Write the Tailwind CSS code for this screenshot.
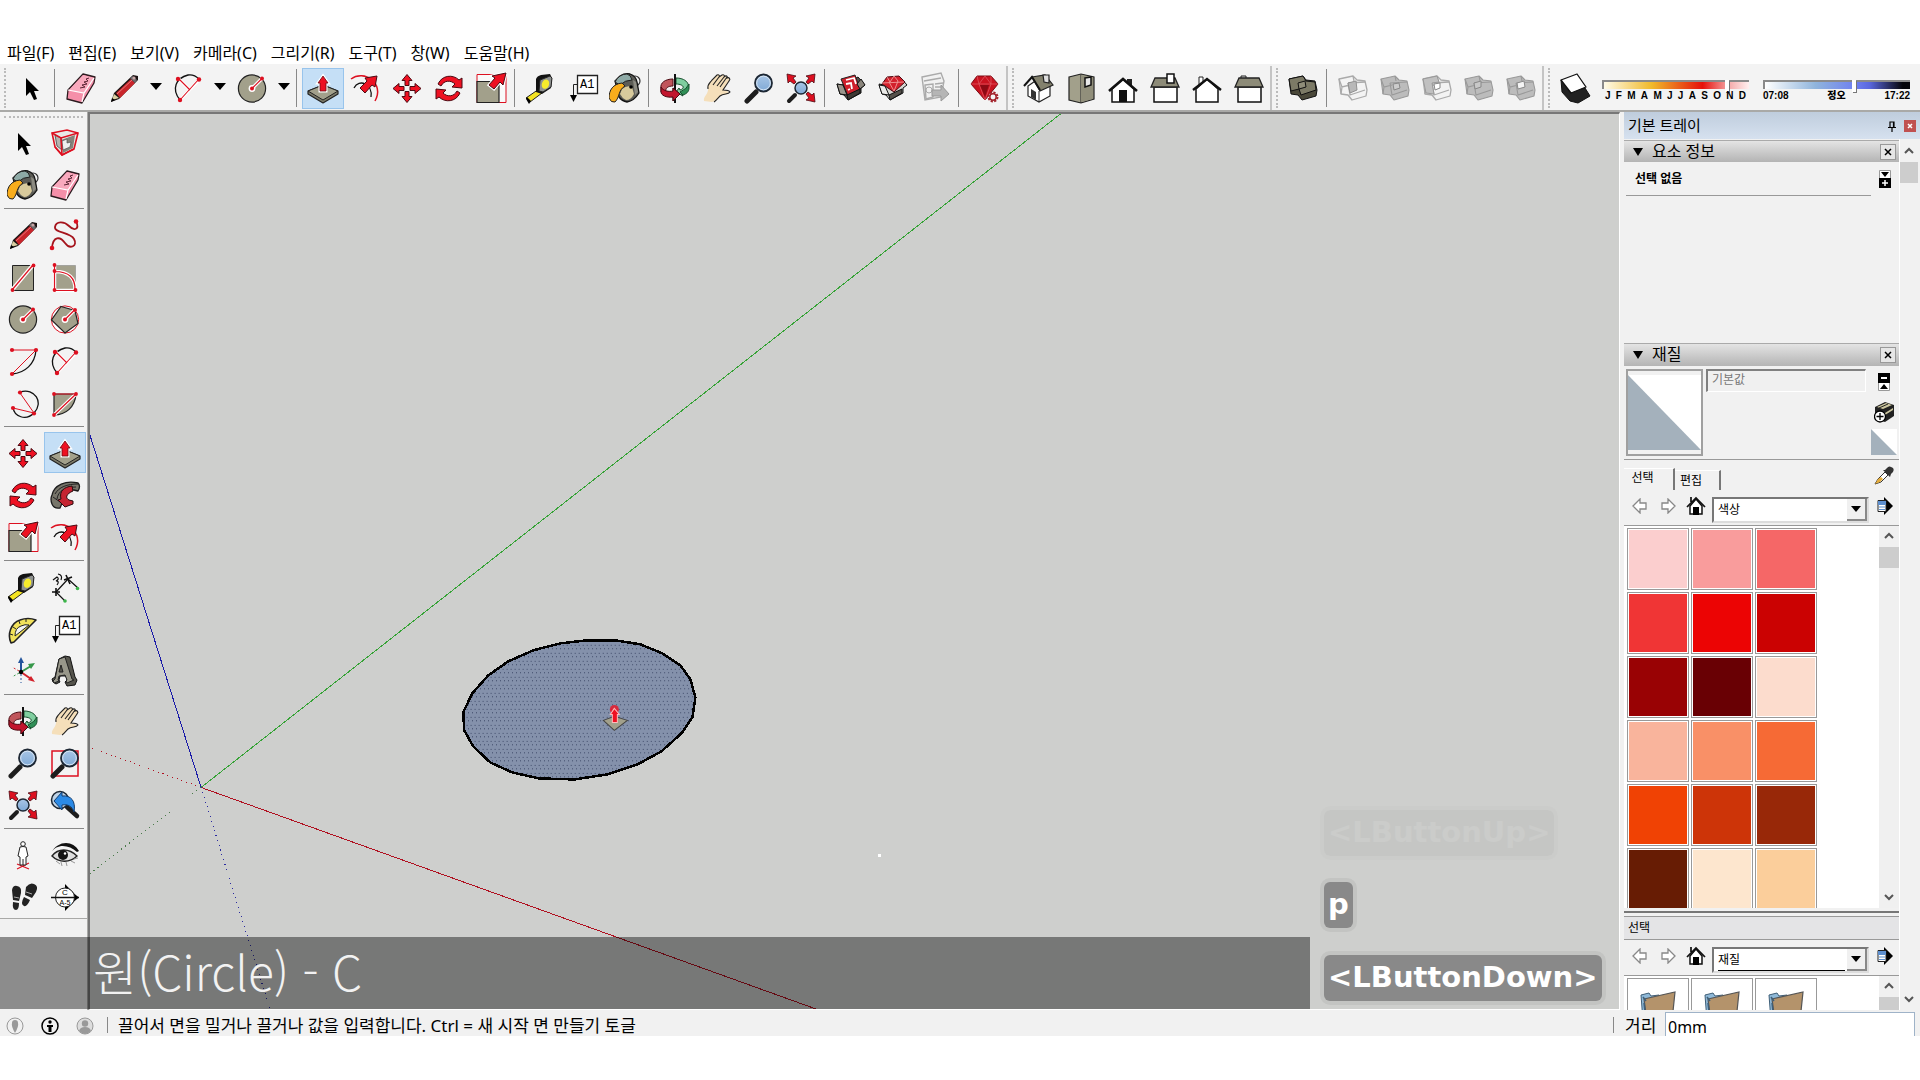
<!DOCTYPE html>
<html lang="ko">
  <head>
    <meta charset="UTF-8" />
    <title>SketchUp</title>
    <script src="https://cdn.jsdelivr.net/npm/@tailwindcss/browser@4"></script>
  </head>
  <body
    class="h-screen flex flex-col bg-white pt-10 pb-11 text-black overflow-hidden font-['Noto_Sans','Noto_Sans_CJK_KR',sans-serif]"
  >
    <!-- 아이콘 -->
    <svg class="hidden" xmlns="http://www.w3.org/2000/svg">
      <defs>
        <path id="fat" d="M0 -14l-5 6h3v5h4v-5h3z" />
      </defs>
      <symbol id="select" viewBox="0 0 32 32">
        <path d="M11 6v18l4-4 4 8 3-1-3-8h5z" />
      </symbol>
      <symbol id="eraser" viewBox="0 0 32 32">
        <path d="M18 2l12 3-1 6-12 20-15-4 1-9z" fill="#f58fa9" stroke="#2a1a1e" stroke-width="1.3" stroke-linejoin="round" />
        <path d="M18 3l11 3-10 15-15-3z" fill="#f9a9bd" />
        <path d="M3 18l16 3 10-15M19 21l-2 9" fill="none" stroke="#fff" stroke-width="1.2" />
        <path d="M15 16l5-1-3-2 5-1-3-2 4-1-2-2 3-1" fill="none" stroke="#5b2534" stroke-width="1" />
      </symbol>
      <symbol id="pencil" viewBox="0 0 32 32">
        <path d="M3 30l3-9L25 3l5 1v4L11 27z" fill="#1b1212" />
        <path d="M8 21L23 7l4 4L12 26z" fill="#c9252b" />
        <path d="M9 22L24 8" stroke="#e8767a" stroke-width="1" />
        <path d="M22 6l3-2 4 4-2 3z" fill="#6d6a6c" />
        <circle cx="26" cy="6" r="1.6" fill="#c9a6a6" />
        <path d="M4 28l2-6 5 4z" fill="#d9cfa2" />
        <path d="M3 30l1-4 3 2z" />
      </symbol>
      <symbol id="freehand" viewBox="0 0 32 32">
        <path d="M3 29c1-12 8-12 13-5s13 3 9-4S5 14 6 8s9-6 14-1 11 4 7-5" fill="none" stroke="#a5141c" stroke-width="1.8" />
        <circle cx="3" cy="29" r="2.3" fill="#dd1020" />
        <circle cx="27" cy="2.5" r="2.3" fill="#dd1020" />
      </symbol>
      <symbol id="arc2" viewBox="0 0 32 32">
        <path d="M8 28C-1 17 4 6 16 3q6-1 11 4" fill="none" stroke="#111" stroke-width="1.3" />
        <path d="M7 7l11 11M27 8L8 28" stroke="#fff" stroke-width="3" />
        <path d="M6 6l12 12M27 7L8 28" stroke="#dd1020" stroke-width="1.1" />
        <circle cx="6" cy="7" r="2.2" fill="#dd1020" />
        <circle cx="27" cy="7.5" r="2.2" fill="#dd1020" />
        <circle cx="8" cy="28" r="2.2" fill="#dd1020" />
      </symbol>
      <symbol id="circle" viewBox="0 0 32 32">
        <circle cx="16" cy="16.5" r="13.6" fill="#a2a08b" stroke="#222" stroke-width="1.2" />
        <path d="M16 16.5L26 6.5" stroke="#fff" stroke-width="3.5" />
        <circle cx="16" cy="16.5" r="3.4" fill="#fff" />
        <path d="M16 16.5L26 6.5" stroke="#dd1020" stroke-width="1.2" />
        <circle cx="16" cy="16.5" r="2" fill="#dd1020" />
        <circle cx="26" cy="6.5" r="2" fill="#dd1020" />
      </symbol>
      <symbol id="polygon" viewBox="0 0 32 32">
        <circle cx="16" cy="16.5" r="13.6" fill="#fff" stroke="#dd1020" stroke-width="1" />
        <path d="M12 3.5l14 4 3 13-13 9.5L2.5 17z" fill="#a2a08b" stroke="#222" stroke-width="1.2" />
        <path d="M16 16.5L26 6.5" stroke="#fff" stroke-width="3.5" />
        <circle cx="16" cy="16.5" r="3.4" fill="#fff" />
        <path d="M16 16.5L26 6.5" stroke="#dd1020" stroke-width="1.2" />
        <circle cx="16" cy="16.5" r="2" fill="#dd1020" />
        <circle cx="26" cy="7" r="2" fill="#dd1020" />
      </symbol>
      <symbol id="rect" viewBox="0 0 32 32">
        <path d="M5.5 4.5h21v25h-21z" fill="#a2a08b" stroke="#222" />
        <path d="M5 29L26 4" stroke="#fff" stroke-width="4" />
        <path d="M5 29L26 4" stroke="#dd1020" stroke-width="1.2" />
        <circle cx="5.5" cy="29" r="1.9" fill="#dd1020" />
        <circle cx="26.5" cy="4.5" r="1.9" fill="#dd1020" />
      </symbol>
      <symbol id="rotrect" viewBox="0 0 32 32">
        <path d="M5.5 4.5h21v25h-21z" fill="#a2a08b" stroke="#888" stroke-width=".6" />
        <path d="M5.5 4v25.5h20.500q1-19-20.500-19" fill="none" stroke="#fff" stroke-width="3.5" />
        <path d="M5.5 4v25.5h20.500q1-19-20.500-19" fill="none" stroke="#dd1020" stroke-width="1.2" />
        <circle cx="5.5" cy="4" r="1.9" fill="#dd1020" />
        <circle cx="5.5" cy="10" r="1.9" fill="#dd1020" />
        <circle cx="5.5" cy="29" r="1.9" fill="#dd1020" />
        <circle cx="26.5" cy="29" r="1.9" fill="#dd1020" />
      </symbol>
      <symbol id="arc" viewBox="0 0 32 32">
        <path d="M5 29C18 28 28 19 29 5" fill="none" stroke="#111" stroke-width="1.3" />
        <path d="M5 29L29 5H5" fill="none" stroke="#dd1020" />
        <circle cx="5" cy="5" r="2.1" fill="#dd1020" />
        <circle cx="29" cy="5" r="2.1" fill="#dd1020" />
        <circle cx="5" cy="29" r="2.1" fill="#dd1020" />
      </symbol>
      <symbol id="arc3" viewBox="0 0 32 32">
        <path d="M13 5c15-5 24 11 14 21-8 8-20 4-21-6" fill="none" stroke="#111" stroke-width="1.3" />
        <path d="M13 6l14 20L6 21" fill="none" stroke="#dd1020" />
        <circle cx="13" cy="5.5" r="2.1" fill="#dd1020" />
        <circle cx="27" cy="26.5" r="2.1" fill="#dd1020" />
        <circle cx="6" cy="21" r="2.1" fill="#dd1020" />
      </symbol>
      <symbol id="pie" viewBox="0 0 32 32">
        <path d="M5 7v21C17 28 26 20 27 7z" fill="#a2a08b" stroke="#222" stroke-width="1.2" />
        <path d="M5 28L27 7" stroke="#fff" stroke-width="3.5" />
        <path d="M5 28L27 7H5" fill="none" stroke="#dd1020" stroke-width="1.2" />
        <circle cx="5" cy="7" r="1.9" fill="#dd1020" />
        <circle cx="27" cy="7" r="1.9" fill="#dd1020" />
        <circle cx="5" cy="28" r="1.9" fill="#dd1020" />
      </symbol>
      <symbol id="pushpull" viewBox="0 0 32 32">
        <path d="M1 19l15-6 15 6v3L16 31 1 22z" fill="#7c7a68" stroke="#222" stroke-width="1.2" stroke-linejoin="round" />
        <path d="M1 19l15-6 15 6-15 9z" fill="#a2a08b" stroke="#222" />
        <path d="M16 4l-5 7h2v8h6v-8h2z" fill="#ee1122" stroke="#fff" stroke-width="3" />
        <path d="M16 4l-5 7h2v8h6v-8h2z" fill="#ee1122" stroke="#6b0a12" stroke-width=".8" />
      </symbol>
      <symbol id="offset" viewBox="0 0 32 32">
        <path d="M2 7C15-3 36 11 26 29" fill="none" stroke="#dd1020" stroke-width="1.5" />
        <path d="M5 16c5-10 19-4 17 9" fill="none" stroke="#111" stroke-width="1.3" />
        <path d="M28 4l-2 11-3-2-7 8-5-5 7-7-2-3z" fill="#ee1122" stroke="#4b0a12" stroke-width="1" />
      </symbol>
      <symbol id="move" viewBox="0 0 32 32">
        <g fill="#ee1122" stroke="#4b0a12" stroke-width="1" transform="translate(16 16.5)">
          <use href="#fat" />
          <use href="#fat" transform="rotate(90)" />
          <use href="#fat" transform="rotate(180)" />
          <use href="#fat" transform="rotate(270)" />
        </g>
      </symbol>
      <symbol id="rotate" viewBox="0 0 32 32">
        <g fill="#ee1122" stroke="#4b0a12" stroke-width="1" stroke-linejoin="round">
          <path id="rot" d="M5 12C9 3 20 2 26 8l3-2v10l-10-1 3-3C18 8 11 8 8 14z" />
          <use href="#rot" transform="rotate(180 16 16.5)" />
        </g>
      </symbol>
      <symbol id="scale" viewBox="0 0 32 32">
        <path d="M2 2.5h29v28H2z" fill="#fff" fill-opacity=".5" stroke="#dd1020" />
        <path d="M2 9.5h22v21H2z" fill="#a2a08b" stroke="#222" stroke-width="1.2" />
        <path d="M31 1l-3 12-3-3-6 7-5-4 6-7-3-2z" fill="#ee1122" stroke="#fff" stroke-width="3" />
        <path d="M31 1l-3 12-3-3-6 7-5-4 6-7-3-2z" fill="#ee1122" stroke="#4b0a12" stroke-width="1" />
      </symbol>
      <symbol id="followme" viewBox="0 0 32 32">
        <path d="M3 16C5 6 17 1 29 4q3 3 0 8l-4-1c-8-1-13 4-11 11l-3 7q-6 1-8-4-2-5 0-9z" fill="#77756a" stroke="#1c1c1c" stroke-width="1.3" stroke-linejoin="round" />
        <path d="M6 15C10 8 18 5 29 5M8 20C9 12 16 8 27 8M4 18l7 5" fill="none" stroke="#222" />
        <path d="M23 7c-8 1-13 5-11 13l-3 1 7 7 8-3v-3l-4-1c-4-2-3-6 4-9z" fill="#c52431" stroke="#2a0a0d" stroke-linejoin="round" />
      </symbol>
      <symbol id="tape" viewBox="0 0 32 32">
        <path d="M1 26l13-9 3 4L5 30z" fill="#f4e322" stroke="#222" />
        <path d="M2 25l4 4-2 3-3-5z" />
        <path d="M11 7q1-3 5-4l9-1 2 4-1 10-9 6-6-2z" fill="#111" />
        <path d="M15 8l10-4 2 2-1 9-8 5-4-1z" fill="#8f9290" stroke="#222" />
        <ellipse cx="20.5" cy="12" rx="3.6" ry="4.8" fill="#f7ec2c" transform="rotate(20 20 12)" />
      </symbol>
      <symbol id="text" viewBox="0 0 32 32">
        <path d="M10.5 3.5h20v18h-20z" fill="#fff" stroke="#222" stroke-width="1.3" />
        <path d="M10 12.5H6.5V24" fill="none" stroke="#222" />
        <path d="M3 23h7l-3.5 7z" />
        <text x="13" y="16" font-family="Liberation Mono" font-size="12">A1</text>
      </symbol>
      <symbol id="bucket" viewBox="0 0 32 32">
        <circle cx="26" cy="9" r="5" fill="none" stroke="#333" stroke-width="1.2" />
        <path d="M6 9l5-5q5-3 10-2 6 2 7 8l2 11q-5 8-12 9-5-1-8-5z" fill="#5c5c56" stroke="#111" stroke-width="1.3" />
        <path d="M6 10q4-8 12-8 4 1 5 6-7 0-12 5z" fill="#8eaaa6" stroke="#222" />
        <path d="M13 17q5-4 10-2l2 7q-3 6-8 6-4-2-6-6z" fill="#d8ca9c" />
        <path d="M24 8l3 2 2 10-3 3z" fill="#8c8b82" />
        <circle cx="22" cy="15" r="1.8" />
        <path d="M0 26C0 18 4 12 13 11l3 3C9 18 11 25 6 30q-4 1-6-4z" fill="#f9ad1c" stroke="#222" />
      </symbol>
      <symbol id="component" viewBox="0 0 32 32">
        <path d="M3 6l15-3 11 3-4 16-12 6-7-8z" fill="#e9e9e7" stroke="#dd1020" stroke-width="1.6" />
        <path d="M12 13l14-5-2 13-10 5z" fill="#85837a" />
        <path d="M13 14l5-2v4l4-1-1 5-7 3z" fill="#eee" stroke="#555" stroke-width=".7" />
        <path d="M6 8l6 3 1 12-5-4z" fill="#b4b4b0" stroke="#333" stroke-width=".7" />
        <path d="M3 6l9 5 17-5M12 11l1 17M25 22L13 28 6 20" fill="none" stroke="#dd1020" stroke-width="1.6" />
      </symbol>
      <symbol id="dims" viewBox="0 0 32 32">
        <path d="M7 21L19 8M7 21l9 9M19 8l10 9" stroke="#111" stroke-width="1.2" />
        <path d="M3 21h8M7 17v8M15 9l8-3M17 4l4 9" stroke="#111" stroke-width="1.6" />
        <path d="M4 9l4-3q3 2-1 4 4 0 1 4M9 3q5 1 3 6" fill="none" stroke="#111" stroke-width="1.2" />
        <circle cx="16" cy="30" r="1.8" fill="#3cb54a" />
        <circle cx="28.5" cy="17.5" r="1.8" fill="#3cb54a" />
      </symbol>
      <symbol id="protractor" viewBox="0 0 32 32">
        <path d="M4 30C0 21 4 10 13 7q8-3 16 0L7 29z" fill="#f2e25b" stroke="#222" stroke-width="1.6" stroke-linejoin="round" />
        <path d="M8 23q0-8 6-10 4-2 8-1z" fill="#f3f3f3" stroke="#222" />
        <path d="M3 21l3 1M6 14l3 2M12 8l1 3M19 6v3" stroke="#222" />
      </symbol>
      <symbol id="axes" viewBox="0 0 32 32">
        <path d="M14 17V6" stroke="#23549c" stroke-width="2" />
        <path d="M14 2l-3 6h6z" fill="#23549c" />
        <path d="M14 17l10-6" stroke="#36984a" stroke-width="2" />
        <path d="M28 8l-7 1 3 5z" fill="#36984a" />
        <path d="M14 17l10 7" stroke="#d3222b" stroke-width="2" />
        <path d="M28 27l-7-2 3-4z" fill="#d3222b" />
        <path d="M12 16L5 12" stroke="#d3222b" stroke-dasharray="2 2" />
        <path d="M12 18l-7 4" stroke="#36984a" stroke-dasharray="2 2" />
        <path d="M14 19v9" stroke="#23549c" stroke-dasharray="2 2" />
        <circle cx="14" cy="17" r="2.2" />
      </symbol>
      <symbol id="text3d" viewBox="0 0 32 32">
        <path d="M10 4l6-3 5 1 5 20 2 3-2 5-8 1-2-4 2-2-1-4h-6l-1 4 1 2-4 2-3-2-1-3 3-2z" fill="#55544c" stroke="#111" />
        <path d="M10 4l6-2 7 22 2 1-7 3-1-2 1-1-2-5-6 1-1 4 1 1-5 2-1-2 2-2zM12 10l-2 7h4z" fill="#98978a" stroke="#222" fill-rule="evenodd" />
      </symbol>
      <symbol id="orbit" viewBox="0 0 32 32">
        <path d="M17 6c12 0 16 9 9 14l-4 1 2 3-7-4 3-4 1 2c6-2 3-6-4-6z" fill="#7fce9f" stroke="#174e2d" />
        <path d="M14 7C6 7 1 11 2 16v4h5c-1-4 2-6 7-6z" fill="#c0555b" stroke="#4b0a12" />
        <path d="M2 15c2 4 8 5 12 4v-3l7 6-7 7v-4C7 26 2 23 2 20z" fill="#c2152d" stroke="#4b0a12" />
        <path d="M21 20l3 3c3-1 6-3 6-7v-4q-2 5-9 8z" fill="#2f8f56" stroke="#174e2d" />
        <path d="M16 2v29" stroke="#111" stroke-width="2" />
        <path d="M14 19v-3l7 6-7 7v-4" fill="#c2152d" stroke="#4b0a12" />
      </symbol>
      <symbol id="hand" viewBox="0 0 32 32">
        <path d="M3 29c-1-5 5-7 4-13-1-4 2-5 4-8l5-5c2-1 3 1 2 2l3-2c2-1 3 1 2 2 2-2 4-1 3 1 2-1 4 1 2 3l-6 9c2 0 5 1 6 3-2 3-6 0-10 4-2 3-3 4-7 5z" fill="#f5dfba" />
        <path d="M7 17c-1-5 2-6 4-9l5-5c2-1 3 1 2 2l3-2c2-1 3 1 2 2 2-2 4-1 3 1 2-1 4 1 2 3l-6 9c2 0 6 0 7 2-2 3-6 1-10 4-2 2-4 5-6 6M12 13l6-8M16 14l7-9M19 15l7-10" fill="none" stroke="#222" stroke-width="1.1" />
      </symbol>
      <symbol id="zoom" viewBox="0 0 32 32">
        <path d="M4 29l9-9" stroke="#1d1d1d" stroke-width="5" stroke-linecap="round" />
        <circle cx="20.5" cy="11" r="8.5" fill="url(#lens)" stroke="#1d2733" stroke-width="1.8" />
        <circle cx="20.5" cy="11" r="6.8" fill="none" stroke="#d7e4f2" stroke-width="1" />
      </symbol>
      <symbol id="zoomwin" viewBox="0 0 32 32">
        <path d="M3 4h26v25H3z" fill="none" stroke="#dd1020" stroke-width="1.5" />
        <use href="#zoom" width="32" height="32" />
      </symbol>
      <symbol id="zoomext" viewBox="0 0 32 32">
        <path d="M4 29l6-6" stroke="#1d1d1d" stroke-width="4" stroke-linecap="round" />
        <circle cx="16" cy="16" r="6" fill="url(#lens)" stroke="#1d2733" stroke-width="1.5" />
        <g fill="#dd1020" stroke="#4b0a12" stroke-width=".8">
          <path d="M2 2l9 2-3 2 3 4-2 2-4-3-2 2z" />
          <path d="M30 2l-9 2 3 2-3 4 2 2 4-3 2 2z" />
          <path d="M30 30l-9-2 3-2-3-4 2-2 4 3 2-2z" />
        </g>
      </symbol>
      <symbol id="zoomprev" viewBox="0 0 32 32">
        <path d="M18 18l10 9" stroke="#1d1d1d" stroke-width="4.5" stroke-linecap="round" />
        <circle cx="11" cy="11" r="8.5" fill="#bfd3e6" stroke="#1d2733" stroke-width="1.5" />
        <path d="M5 12l8-9v4c9-1 14 5 12 16-2-6-6-8-12-7v5z" fill="#2b8ae6" stroke="#123c6e" stroke-linejoin="round" />
      </symbol>
      <symbol id="walkcam" viewBox="0 0 32 32">
        <path d="M10 30l12-6M10 25l12 5" stroke="#dd1020" stroke-width="1.2" />
        <circle cx="16" cy="5" r="2.3" fill="#fff" stroke="#222" />
        <path d="M13 8q3-1 6 0l2 9-2 1v8h-6v-8l-2-1z" fill="#fff" stroke="#222" />
        <path d="M16 20v6" stroke="#222" />
      </symbol>
      <symbol id="look" viewBox="0 0 32 32">
        <path d="M2 14C8 4 20 6 28 13l2-1C24 1 9 1 2 14z" fill="#111" />
        <path d="M3 17c6-8 17-8 25 0-7 7-18 7-25 0z" fill="#ddd" stroke="#222" stroke-width="1.4" />
        <circle cx="14" cy="16" r="5" fill="#111" />
        <circle cx="16" cy="14.5" r="1.2" fill="#fff" />
        <path d="M7 22l4 3M12 23l1 4M17 23l1 4M22 22l4 2M25 20l4-1" stroke="#999" />
      </symbol>
      <symbol id="walk" viewBox="0 0 32 32">
        <path d="M5 9q1-5 5-4 5 1 4 7l-2 8-6-1zM6 21l6 1q0 7-3 7-4 0-3-8z" fill="#222" />
        <path d="M19 6q4-5 8-3 5 2 2 8l-4 6-7-3zM17 16l6 3q-3 7-6 6-4-2 0-9z" fill="#222" />
        <path d="M7 16l5 1M19 11l6 2" stroke="#aaa" />
      </symbol>
      <symbol id="section" viewBox="0 0 32 32">
        <path d="M16 3l13 13.5L16 30z" />
        <circle cx="16" cy="16.5" r="9.5" fill="#fff" stroke="#222" />
        <path d="M2 16.5h28" stroke="#111" stroke-width="1.5" />
        <path d="M30 16.5l-4-3v6z" />
        <text x="16" y="14" font-family="Liberation Sans" font-size="8" text-anchor="middle">C</text>
        <text x="16" y="24" font-family="Liberation Sans" font-size="7" text-anchor="middle">A-5</text>
      </symbol>
      <symbol id="warehouse" viewBox="0 0 32 32">
        <path d="M2 12l5 1L23 5l7 8-4 3v5l-13 7-4-5-4-1z" fill="#57524c" stroke="#111" stroke-linejoin="round" />
        <path d="M6 7l14-4 5 14-12 7z" fill="#cf1f2b" stroke="#222" />
        <path d="M11 8l8-2 2 6M11 12l5-1 1 6M13 18l2-1" stroke="#fff" stroke-width="1.8" fill="none" />
        <path d="M12 23l13-6v4l-12 7z" fill="#3d3934" stroke="#111" />
        <path d="M25 17l-3-5 4-5 4 6z" fill="#8a857c" stroke="#111" />
        <path d="M2 12l6 1 4 10-7-1z" fill="#9a958c" stroke="#111" />
      </symbol>
      <symbol id="extwarehouse" viewBox="0 0 32 32">
        <path d="M2 12l5 1L23 5l7 8-4 3v5l-13 7-4-5-4-1z" fill="#d6d6d2" stroke="#111" stroke-linejoin="round" />
        <path d="M12 23l13-6v4l-12 7z" fill="#55514b" stroke="#111" />
        <path d="M10 5l12-1 6 6-11 10L5 12z" fill="#d3202c" stroke="#4b0a12" />
        <path d="M5 11l22-1M12 10l5 9 4-10M10 5l3 5 4-6 4 5" fill="none" stroke="#f19a9a" stroke-width=".9" />
        <path d="M2 13l6 1 4 9-7-1z" fill="#e9e9e7" stroke="#111" />
      </symbol>
      <symbol id="layout" viewBox="0 0 32 32">
        <path d="M3 5l19-4 3 8-3 16-16 3z" fill="#f1f1f1" stroke="#aaa" stroke-width="1.4" />
        <path d="M5 9l17-3M6 13l8-1v13l-7 2zM16 12l8-1M16 15h7" stroke="#aaa" stroke-width="1.4" fill="none" />
        <circle cx="10" cy="18" r="3" fill="none" stroke="#aaa" />
        <path d="M13 18h9v-5l8 9-8 7v-5h-9z" fill="#b5b5b5" stroke="#999" />
      </symbol>
      <symbol id="ruby" viewBox="0 0 32 32">
        <path d="M8 4h14l7 8-13 16L2 12z" fill="#c9121f" stroke="#7a0a12" />
        <path d="M2 12h27M10 12l6 16 6-16M8 4l2 8 6-8 6 8V4" fill="none" stroke="#e05560" stroke-width=".8" />
        <path d="M11 13h9l-4 12z" fill="#8d0a14" />
        <circle cx="24" cy="25" r="4.5" fill="#f3f3f3" stroke="#a3232c" stroke-width="2" stroke-dasharray="2.200 1.300" />
        <circle cx="24" cy="25" r="3.2" fill="#f3f3f3" stroke="#a3232c" stroke-width="1.5" />
      </symbol>
      <symbol id="iso" viewBox="0 0 32 32">
        <path d="M5 14v10l11 6 11-6V12l-9-7z" fill="#fff" stroke="#222" stroke-width="1.2" />
        <path d="M16 19v11" stroke="#222" />
        <path d="M9 5l13-2 8 10-13 6z" fill="#83816d" stroke="#222" stroke-width="1.2" />
        <path d="M1 14L9 5l8 13" fill="none" stroke="#111" stroke-width="2" />
        <path d="M20 3h6v8l-5-1z" fill="#ddd" stroke="#222" stroke-width="1.2" />
        <path d="M8 17l5 3v8l-5-3z" fill="#333" />
      </symbol>
      <symbol id="top" viewBox="0 0 32 32">
        <path d="M4 5l12-3 13 3v22l-13 4L4 28z" fill="#a2a08b" stroke="#222" stroke-width="1.2" />
        <path d="M16 3v28" stroke="#222" />
        <path d="M16 3l12 3v21l-12 3z" fill="#918f7b" />
        <path d="M20 6l6-1v8l-6 2z" fill="#e8e8e8" stroke="#111" stroke-width="1.5" />
      </symbol>
      <symbol id="front" viewBox="0 0 32 32">
        <path d="M20 7h5v8h-5z" fill="#222" />
        <path d="M5 17v13h22V17L16 7z" fill="#fff" stroke="#111" stroke-width="1.5" />
        <path d="M2 19L16 7l14 12" fill="none" stroke="#111" stroke-width="2.6" />
        <path d="M12 18h8v12h-8z" fill="#111" />
      </symbol>
      <symbol id="right" viewBox="0 0 32 32">
        <path d="M5 15h23v15H5z" fill="#fff" stroke="#111" stroke-width="1.5" />
        <path d="M6 6h20l4 9H2z" fill="#8d8b78" stroke="#222" stroke-width="1.3" />
        <path d="M18 2h7v9h-7z" fill="#fff" stroke="#111" stroke-width="1.5" />
      </symbol>
      <symbol id="back" viewBox="0 0 32 32">
        <path d="M8 5h4v9H8z" fill="#fff" stroke="#222" />
        <path d="M5 17v13h22V17L16 7z" fill="#fff" stroke="#111" stroke-width="1.5" />
        <path d="M2 18L16 7l14 11" fill="none" stroke="#111" stroke-width="2.4" />
      </symbol>
      <symbol id="left" viewBox="0 0 32 32">
        <path d="M8 4h5v3H8z" fill="#ddd" stroke="#222" />
        <path d="M5 15h23v15H5z" fill="#fff" stroke="#111" stroke-width="1.5" />
        <path d="M6 6h20l4 9H2z" fill="#8d8b78" stroke="#222" stroke-width="1.3" />
      </symbol>
      <symbol id="shell" viewBox="0 0 32 32">
        <path d="M2 7l14-3 3 4 9 1 2 9-1 6-14 4-4-5-7-1z" fill="#4a4839" stroke="#111" stroke-linejoin="round" />
        <path d="M2 7l14-3 3 5 9 1 1 8-15 5-2-6-8 2z" fill="#7c7a66" stroke="#111" />
        <path d="M11 11l7-2 1 6-7 2z" fill="#8f8d79" stroke="#111" />
      </symbol>
      <symbol id="boxes" viewBox="0 0 32 32">
        <path d="M2 7l14-3 4 4 8 1 2 9-1 6-14 4-4-5-7-1z" stroke-linejoin="round" />
        <path d="M2 7l3 8 8-2M16 4l1 5M5 15l-1 7M11 11l2 12 15-5M28 10l-17 1" fill="none" />
      </symbol>
      <symbol id="intersect" viewBox="0 0 32 32">
        <use href="#boxes" width="32" height="32" fill="#f3f3f3" stroke="#aaa" stroke-width="1.3" />
        <path d="M11 11l8-2 1 9-7 3z" fill="#b8b8b8" stroke="#909090" />
      </symbol>
      <symbol id="union" viewBox="0 0 32 32">
        <use href="#boxes" width="32" height="32" fill="#bcbcbc" stroke="#999" stroke-width="1.1" />
        <path d="M14 12l6-1 1 5-6 2z" fill="#ccc" stroke="#888" />
      </symbol>
      <symbol id="subtract" viewBox="0 0 32 32">
        <use href="#boxes" width="32" height="32" fill="#f3f3f3" stroke="#aaa" stroke-width="1.3" />
        <path d="M2 7l14-3 2 6-7 1 2 11-8-1z" fill="#c0c0c0" stroke="#999" />
        <path d="M13 12l6-1v5l-5 2z" fill="#fff" stroke="#888" />
      </symbol>
      <symbol id="trim" viewBox="0 0 32 32">
        <use href="#boxes" width="32" height="32" fill="#bcbcbc" stroke="#999" stroke-width="1.1" />
        <path d="M11 11l7-2v6l-6 2z" fill="#c8c8c8" stroke="#888" />
      </symbol>
      <symbol id="split" viewBox="0 0 32 32">
        <use href="#boxes" width="32" height="32" fill="#bcbcbc" stroke="#999" stroke-width="1.1" />
        <path d="M12 11l7-2 1 6-7 2z" fill="#f5f5f5" stroke="#888" />
      </symbol>
      <symbol id="shadow" viewBox="0 0 32 32">
        <path d="M2 8l1 12 8 9 8 2 12-7-5-8z" fill="#222" stroke="#111" />
        <path d="M2 8l16-6 9 13-15 6z" fill="#fff" stroke="#111" stroke-width="1.3" stroke-linejoin="round" />
      </symbol>
      <symbol id="navleft" viewBox="0 0 16 16">
        <path d="M1 8l7-7v4h6v6H8v4z" fill="#fff" stroke="#888" stroke-width="1.3" />
      </symbol>
      <symbol id="navright" viewBox="0 0 16 16">
        <path d="M15 8L8 1v4H2v6h6v4z" fill="#fff" stroke="#888" stroke-width="1.3" />
      </symbol>
      <symbol id="home" viewBox="0 0 20 20">
        <path d="M4 10v8h12v-8l-6-7z" fill="#fff" stroke="#111" stroke-width="1.5" />
        <path d="M1 11l9-9 9 9M5 1v5" fill="none" stroke="#111" stroke-width="1.7" />
        <path d="M7 11h6v8H7z" />
      </symbol>
      <symbol id="details" viewBox="0 0 16 18">
        <path d="M7 0l9 9-9 9z" />
        <path d="M1 3.5h8v11H1z" fill="#fff" stroke="#222" />
        <path d="M1 4h8v4H1z" fill="#5d8fcf" />
        <path d="M2 10h6M2 12.5h6" stroke="#5d8fcf" />
      </symbol>
      <symbol id="up" viewBox="0 0 12 12">
        <path d="M2 8l4-4 4 4" fill="none" stroke="#555" stroke-width="2" />
      </symbol>
      <symbol id="down" viewBox="0 0 12 12">
        <path d="M2 4l4 4 4-4" fill="none" stroke="#555" stroke-width="2" />
      </symbol>
      <symbol id="folder" viewBox="0 0 40 30">
        <path d="M3 4l8-2 2 3 8-1v26H5z" fill="#8fb9d8" stroke="#3f5f78" />
        <path d="M6 8l31-7-3 29H9z" fill="#b4936b" stroke="#555" stroke-width="1.2" />
        <path d="M5 6l3 4M6 12l2 18" stroke="#3f5f78" stroke-width="1.5" />
      </symbol>
    </svg>

    <!-- 메뉴 -->
    <nav class="h-6 shrink-0 flex items-center gap-[14px] pl-[7px] pt-px text-base leading-6">
      <a href="#">파일(F)</a>
      <a href="#">편집(E)</a>
      <a href="#">보기(V)</a>
      <a href="#">카메라(C)</a>
      <a href="#">그리기(R)</a>
      <a href="#">도구(T)</a>
      <a href="#">창(W)</a>
      <a href="#">도움말(H)</a>
    </nav>

    <!-- 상단 도구 모음 -->
    <header class="h-12 shrink-0 flex bg-[#f3f3f3] border-b-2 border-[#a9a9a7]">
      <div id="toolbar" class="flex pt-[2px]"></div>
      <div class="flex-1 flex items-start pt-4 gap-[14px] pl-[6px] pr-[10px] text-[10px] leading-3 font-bold font-['Liberation_Sans','Noto_Sans_CJK_KR',sans-serif]">
        <label class="flex-1 flex flex-col">
          <input
            type="range"
            min="0"
            max="100"
            value="86"
            aria-label="날짜"
            class="appearance-none w-full h-[9px] border-t-2 border-l-2 border-[#8a8a8a] [background-image:linear-gradient(90deg,#fffbe8,#f0b92a_33%,#e6100a_68%,#f5a9a9_86%,#fff0f0)] [&::-webkit-slider-thumb]:appearance-none [&::-webkit-slider-thumb]:w-1 [&::-webkit-slider-thumb]:h-3 [&::-webkit-slider-thumb]:bg-white [&::-webkit-slider-thumb]:shadow-[1px_1px_0_#777]"
          />
          <span class="flex justify-between px-[3px] pt-px">
            <i class="not-italic">J</i><i class="not-italic">F</i><i class="not-italic">M</i><i class="not-italic">A</i><i class="not-italic">M</i><i class="not-italic">J</i><i class="not-italic">J</i><i class="not-italic">A</i><i class="not-italic">S</i><i class="not-italic">O</i><i class="not-italic">N</i><i class="not-italic">D</i>
          </span>
        </label>
        <label class="flex-1 flex flex-col">
          <input
            type="range"
            min="0"
            max="100"
            value="62"
            aria-label="시간"
            class="appearance-none w-full h-[9px] border-t-2 border-l-2 border-[#8a8a8a] [background-image:linear-gradient(90deg,#fff,#8fb4dc_35%,#6f80f0_62%,#5a68e0_72%,#05050a_95%)] [&::-webkit-slider-thumb]:appearance-none [&::-webkit-slider-thumb]:w-1 [&::-webkit-slider-thumb]:h-3 [&::-webkit-slider-thumb]:bg-white [&::-webkit-slider-thumb]:shadow-[1px_1px_0_#777]"
          />
          <span class="flex justify-between pt-px"><b>07:08</b><b>정오</b><b>17:22</b></span>
        </label>
      </div>
    </header>

    <!-- 작업 영역 -->
    <main class="flex-1 min-h-0 flex bg-[#f1f1f1]">
      <aside class="w-[88px] shrink-0 border-r border-[#a9a9a7]">
        <div id="palette" class="pt-[10px] pl-[2px] pr-px bg-[#f3f3f3] border-b border-[#a9a9a7] relative"></div>
      </aside>

      <section class="flex-1 min-w-0 relative bg-[#cecfcd] border-t-2 border-l-2 border-t-[#777] border-l-[#777] border-r border-b border-r-white border-b-white">
        <svg
          class="absolute inset-0 w-full h-full"
          viewBox="90 114 1528 895"
          preserveAspectRatio="xMinYMin slice"
          shape-rendering="crispEdges"
          fill="none"
        >
          <defs>
            <linearGradient id="lens" x1="0" y1="0" x2="0" y2="1">
              <stop offset="0" stop-color="#a9c6e6" />
              <stop offset="1" stop-color="#7fa9d6" />
            </linearGradient>
            <pattern id="dots" width="4" height="8" patternUnits="userSpaceOnUse">
              <rect width="4" height="8" fill="#8491ab" />
              <rect width="1" height="1" fill="#1c2748" />
              <rect x="2" y="4" width="1" height="1" fill="#1c2748" />
            </pattern>
          </defs>
          <path d="M201 787L1061 113" stroke="#36a336" />
          <path d="M201 787L89 432" stroke="#1a1aa8" />
          <path d="M201 787L820 1010" stroke="#b01020" />
          <path d="M201 787l69 222" stroke="#2a2aa0" stroke-dasharray="1 4" />
          <path d="M201 787L90 747" stroke="#b01020" stroke-dasharray="1 4" />
          <path d="M201 787L90 873" stroke="#4a7a4a" stroke-dasharray="1 4" />
          <path d="M463 712l9-19 16-18 20-14 25-11 27-7 27-3h28l25 4 22 9 18 12 10 14 5 18-3 20-11 16-20 18-24 13-30 10-33 5-35-1-27-6-22-10-17-16-9-16z" fill="url(#dots)" stroke="#000" stroke-width="2.5" />
          <circle cx="879" cy="855" r="1.5" fill="#fff" />
          <g shape-rendering="auto">
            <path d="M603 720l11-4 13 4-13 10z" fill="#a2a08b" stroke="#444" />
            <circle cx="614" cy="709" r="4.5" fill="#ee1122" fill-opacity=".8" />
            <path d="M614 708l-4 6h2v8h5v-8h2z" fill="#ee1122" stroke="#fbb" />
          </g>
        </svg>
      </section>

      <!-- 기본 트레이 -->
      <aside class="w-[300px] shrink-0 pl-1 flex flex-col">
        <div class="h-[27px] shrink-0 flex items-center pl-1 pr-1 gap-[6px] bg-linear-to-b from-[#bfcddd] to-[#d6e1ef]">
          <h2 class="flex-1 pb-[2px] text-[15px] leading-5">기본 트레이</h2>
          <button aria-label="고정">
            <svg class="size-3" viewBox="0 0 12 12"><path d="M4 7V2h4v5M2 7.5h8M6 8v4M7.5 2v5" fill="none" stroke="#000" stroke-width="1.2" /></svg>
          </button>
          <button aria-label="트레이 닫기" class="size-3 bg-[#c05050] flex items-center justify-center">
            <svg class="size-2" viewBox="0 0 8 8"><path d="M2 2l4 4M6 2L2 6" stroke="#fff" stroke-width="1.5" /></svg>
          </button>
        </div>

        <div class="flex-1 min-h-0 flex">
          <div class="flex-1 min-w-0 flex flex-col pt-px">
            <div class="h-[22px] shrink-0 flex items-center pl-2 pr-[3px] bg-linear-to-b from-[#e4e4e4] to-[#b4b4b4] border-t border-[#aaa]">
              <svg class="size-3" viewBox="0 0 12 12"><path d="M1 2h10L6 10z" /></svg>
              <h3 class="flex-1 pl-2 pb-[2px] text-base leading-5">요소 정보</h3>
              <button aria-label="닫기" class="size-4 border border-[#999] bg-[#e6e6e6] flex items-center justify-center">
                <svg class="size-2" viewBox="0 0 8 8"><path d="M1 1l6 6M7 1L1 7" stroke="#000" stroke-width="1.5" /></svg>
              </button>
            </div>
            <div class="h-[181px] shrink-0">
              <div class="h-[34px] ml-[2px] mr-[28px] flex items-center border-b border-[#999] pl-[9px] text-xs font-bold relative">
                선택 없음
                <button aria-label="자세히" class="absolute -right-5 top-2">
                  <svg class="w-3 h-[18px]" viewBox="0 0 12 18"><path d="M.5.5h11v17H.5z" fill="#fff" stroke="#999" /><path d="M0 8h12v10H0zM2 2h8L6 7z" /><path d="M6 10v6M3 13h6" stroke="#fff" stroke-width="1.5" /></svg>
                </button>
              </div>
            </div>

            <div class="h-[23px] shrink-0 flex items-center pl-2 pr-[3px] bg-linear-to-b from-[#e4e4e4] to-[#b4b4b4] border-t border-[#aaa]">
              <svg class="size-3" viewBox="0 0 12 12"><path d="M1 2h10L6 10z" /></svg>
              <h3 class="flex-1 pl-2 pb-[2px] text-base leading-5">재질</h3>
              <button aria-label="닫기" class="size-4 border border-[#999] bg-[#e6e6e6] flex items-center justify-center">
                <svg class="size-2" viewBox="0 0 8 8"><path d="M1 1l6 6M7 1L1 7" stroke="#000" stroke-width="1.5" /></svg>
              </button>
            </div>
            <div class="h-[94px] shrink-0 flex items-start gap-[3px] pl-[2px] pt-[3px] border-b border-[#999]">
              <div class="w-[77px] h-[87px] border-2 border-[#a0a0a0] py-1">
                <svg class="w-full h-full" viewBox="0 0 73 75" preserveAspectRatio="none"><path d="M0 0h73v75H0z" fill="#fff" /><path d="M0 0l73 75H0z" fill="#a4b1bc" /></svg>
              </div>
              <input
                type="text"
                value="기본값"
                aria-label="재질 이름"
                class="flex-1 min-w-0 h-[23px] px-1 pb-1 bg-[#f0f0f0] border-t-2 border-l-2 border-b border-r border-t-[#808080] border-l-[#808080] border-b-white border-r-white text-xs text-[#777]"
              />
              <div class="w-[30px] h-[86px] flex flex-col items-center justify-between pt-1">
                <button aria-label="보조 창">
                  <svg class="w-3 h-[18px] block" viewBox="0 0 12 18"><path d="M.5.5h11v17H.5z" fill="#fff" stroke="#999" /><path d="M0 0h12v10H0zM2 16h8l-4-5z" /><path d="M3 5h6" stroke="#fff" stroke-width="2" /></svg>
                </button>
                <button aria-label="재질 만들기" class="pt-1">
                  <svg class="w-5 h-[22px] block" viewBox="0 0 20 22"><path d="M1 6l10-5 9 3v11l-9 6-10-3z" fill="#222" /><path d="M3 6l9-4 6 2-9 4zM11 12l8-5v2l-8 5z" fill="#cdc7a0" /><path d="M5 7l9-4" stroke="#222" /><circle cx="6" cy="15.5" r="5.5" fill="#fff" stroke="#000" stroke-width="1.3" /><path d="M6 12v7M2.5 15.5h7" stroke="#000" stroke-width="1.3" /></svg>
                </button>
                <svg class="size-[26px]" viewBox="0 0 26 26"><path d="M0 0h26v26H0z" fill="#fff" /><path d="M0 0l26 26H0z" fill="#a4b1bc" /></svg>
              </div>
            </div>

            <div class="h-[30px] shrink-0 flex items-end text-xs leading-4">
              <button class="w-[51px] h-[22px] pr-3 pb-1 border-t border-t-white border-r-2 border-r-[#777]">선택</button>
              <button class="w-[46px] h-5 pr-3 border-t border-t-white border-r-2 border-r-[#777]">편집</button>
              <button aria-label="샘플 색칠" class="ml-auto mr-1 mb-1">
                <svg class="w-[22px] h-5 block" viewBox="0 0 22 20"><path d="M2 18l3-5 7-7 3 3-7 7z" fill="#fff" stroke="#333" /><path d="M2 18l3-5 3-2 2 2-3 3z" fill="#e5ac3a" /><path d="M10 4l7 7 1-3q4-3 2-6-4-3-6 0l-2 2z" fill="#333" /></svg>
              </button>
            </div>
            <div class="h-[35px] shrink-0 flex items-center pl-2 pr-1 pb-1">
              <button aria-label="뒤로" class="w-7"><svg class="size-4"><use href="#navleft" /></svg></button>
              <button aria-label="앞으로" class="w-[26px]"><svg class="size-4"><use href="#navright" /></svg></button>
              <button aria-label="모델 내" class="w-5"><svg class="size-5"><use href="#home" /></svg></button>
              <div class="flex-1 relative ml-[6px] mr-[6px] mt-2">
                <select aria-label="재질 모음" class="block appearance-none w-full h-[26px] pl-1 bg-white border-2 border-t-[#777] border-l-[#777] border-b-[#ddd] border-r-[#ddd] text-xs">
                  <option>색상</option>
                </select>
                <span class="absolute right-[2px] top-[2px] w-5 h-[22px] bg-[#f0f0f0] border-r-2 border-b-2 border-[#888] flex items-center justify-center pointer-events-none">
                  <svg class="w-[10px] h-[6px]" viewBox="0 0 10 6"><path d="M0 0h10L5 6z" /></svg>
                </span>
              </div>
              <button aria-label="세부 정보" class="w-5"><svg class="w-4 h-[18px] block mx-auto"><use href="#details" /></svg></button>
            </div>
            <div class="flex-1 min-h-0 flex border-t border-[#999] bg-white">
              <div id="swatches" class="flex-1 flex flex-wrap content-start gap-[2px] pl-[3px] pt-[2px] pr-10 overflow-hidden"></div>
              <div class="w-5 bg-[#f0f0f0] flex flex-col items-center">
                <svg class="size-3 mt-1 mb-[5px] shrink-0"><use href="#up" /></svg>
                <div class="w-full h-[21px] bg-[#cdcdcd]"></div>
                <svg class="size-3 mt-auto mb-[5px] shrink-0"><use href="#down" /></svg>
              </div>
            </div>

            <div class="h-[9px] shrink-0 pt-[3px] border-b border-[#999]"><div class="h-[2px] bg-[#777]"></div></div>
            <div class="h-[23px] shrink-0 pl-1 bg-[#e4e4e6] border-b border-[#999] text-xs leading-[22px]">선택</div>
            <div class="h-[35px] shrink-0 flex items-center pl-2 pr-1 pb-1">
              <button aria-label="뒤로" class="w-7"><svg class="size-4"><use href="#navleft" /></svg></button>
              <button aria-label="앞으로" class="w-[26px]"><svg class="size-4"><use href="#navright" /></svg></button>
              <button aria-label="모델 내" class="w-5"><svg class="size-5"><use href="#home" /></svg></button>
              <div class="flex-1 relative ml-[6px] mr-[6px] mt-2">
                <select aria-label="보조 재질 모음" class="block appearance-none w-full h-[26px] pl-1 bg-white border-2 border-t-[#777] border-l-[#777] border-b-[#ddd] border-r-[#ddd] text-xs">
                  <option>재질</option>
                </select>
                <span class="absolute left-[6px] right-6 bottom-[2px] h-px bg-black"></span>
                <span class="absolute right-[2px] top-[2px] w-5 h-[22px] bg-[#f0f0f0] border-r-2 border-b-2 border-[#888] flex items-center justify-center pointer-events-none">
                  <svg class="w-[10px] h-[6px]" viewBox="0 0 10 6"><path d="M0 0h10L5 6z" /></svg>
                </span>
              </div>
              <button aria-label="세부 정보" class="w-5"><svg class="w-4 h-[18px] block mx-auto"><use href="#details" /></svg></button>
            </div>
            <div class="h-[35px] shrink-0 flex border-t border-[#999] bg-white overflow-hidden">
              <div class="flex-1 flex gap-[2px] pl-[3px] pt-[2px]">
                <div class="w-[62px] h-16 border border-[#999] pt-3 pl-[10px]"><svg class="w-10 h-[30px]"><use href="#folder" /></svg></div>
                <div class="w-[62px] h-16 border border-[#999] pt-3 pl-[10px]"><svg class="w-10 h-[30px]"><use href="#folder" /></svg></div>
                <div class="w-[62px] h-16 border border-[#999] pt-3 pl-[10px]"><svg class="w-10 h-[30px]"><use href="#folder" /></svg></div>
              </div>
              <div class="w-5 bg-[#f0f0f0] flex flex-col items-center">
                <svg class="size-3 mt-1 mb-[5px] shrink-0"><use href="#up" /></svg>
                <div class="w-full h-[21px] shrink-0 bg-[#cdcdcd]"></div>
              </div>
            </div>
          </div>
          <div class="w-[21px] shrink-0 pr-[2px] border-l border-white flex flex-col items-center">
            <svg class="size-3 mt-[6px] mb-[5px] shrink-0"><use href="#up" /></svg>
            <div class="w-full h-[21px] bg-[#cdcdcd]"></div>
            <svg class="size-3 mt-auto mb-[5px] shrink-0"><use href="#down" /></svg>
          </div>
        </div>
      </aside>
    </main>

    <!-- 상태 표시줄 -->
    <footer class="h-[26px] shrink-0 flex items-center bg-[#f1f1f1] overflow-hidden text-[17px] leading-6">
      <div class="flex gap-[17px] pl-[6px] pt-[6px]">
        <svg class="size-[18px]" viewBox="0 0 18 18"><circle cx="9" cy="9" r="8" fill="none" stroke="#999" /><path d="M9 16q-4-7-3-10a3 3 0 0 1 6 0q1 3-3 10z" fill="#999" /></svg>
        <svg class="size-[18px]" viewBox="0 0 18 18"><circle cx="9" cy="9" r="8" fill="none" stroke="#000" stroke-width="1.5" /><circle cx="9" cy="5" r="1.7" /><path d="M6 8h6v2h-1.5v5h-3v-5H6z" /></svg>
        <svg class="size-[18px]" viewBox="0 0 18 18"><circle cx="9" cy="9" r="8" fill="#ddd" stroke="#999" /><circle cx="9" cy="6.5" r="3.2" fill="#999" /><path d="M3 14q1-4 6-4t6 4q-6 6-12 0z" fill="#999" /></svg>
      </div>
      <span class="w-px h-4 mt-1 ml-[13px] mr-[10px] bg-[#888]"></span>
      <p class="flex-1 pt-[6px] whitespace-nowrap">끌어서 면을 밀거나 끌거나 값을 입력합니다. Ctrl = 새 시작 면 만들기 토글</p>
      <span class="w-px h-4 mt-1 mr-[11px] bg-[#888]"></span>
      <label for="vcb" class="w-10 pt-[6px]">거리</label>
      <input id="vcb" type="text" value="0mm" class="w-[250px] h-8 mt-[10px] mr-[5px] pl-[2px] pb-[2px] bg-white border border-[#9fb3c8] text-base" />
    </footer>

    <!-- 자막과 키 입력 표시 -->
    <div class="absolute left-0 bottom-[71px] w-[1310px] h-[72px] pl-[93px] bg-black/42 text-[#f2f2f2] text-5xl leading-[66px] font-light font-['Noto_Sans_CJK_KR',sans-serif]">
      원(Circle) - C
    </div>
    <div class="absolute left-[1324px] bottom-[79px] flex flex-col items-start text-[29px] leading-[44px] font-bold text-white font-['DejaVu_Sans',sans-serif]">
      <kbd class="font-[inherit] h-[46px] px-1 mb-[26px] rounded-md bg-black/4 text-white/10 shadow-[0_0_0_4px_rgba(0,0,0,0.01)]">&lt;LButtonUp&gt;</kbd>
      <kbd class="font-[inherit] h-[46px] px-1 mb-[27px] rounded-md bg-[#898989] shadow-[0_0_0_4px_rgba(0,0,0,0.05)]">p</kbd>
      <kbd class="font-[inherit] h-[46px] px-1 rounded-md bg-[#898989] shadow-[0_0_0_4px_rgba(0,0,0,0.05)]">&lt;LButtonDown&gt;</kbd>
    </div>

    <script>
      // "|" 는 구분선, "+" 가 붙으면 드롭다운 화살표가 있는 버튼
      const groups = [
        "select | eraser pencil+ arc2+ circle+ | pushpull offset move rotate scale | tape text bucket | orbit hand zoom zoomext | warehouse extwarehouse layout | ruby",
        "iso top front right back left",
        "shell | intersect union subtract trim split",
        "shadow",
      ];
      const paletteRows = [
        ["select", "component"],
        ["bucket", "eraser"],
        null,
        ["pencil", "freehand"],
        ["rect", "rotrect"],
        ["circle", "polygon"],
        ["arc", "arc2"],
        ["arc3", "pie"],
        null,
        ["move", "pushpull"],
        ["rotate", "followme"],
        ["scale", "offset"],
        null,
        ["tape", "dims"],
        ["protractor", "text"],
        ["axes", "text3d"],
        null,
        ["orbit", "hand"],
        ["zoom", "zoomwin"],
        ["zoomext", "zoomprev"],
        null,
        ["walkcam", "look"],
        ["walk", "section"],
      ];
      const colors = [
        "#fbcece", "#f99c9c", "#f56767", "#f03535", "#ec0404", "#cb0202",
        "#990204", "#690004", "#fcdccd", "#f9b49c", "#f99067", "#f66a35",
        "#f04204", "#cd3408", "#982808", "#671c04", "#fde6ce", "#fbce9b",
      ];

      const icon = (name) => `<svg class="size-8"><use href="#${name}" /></svg>`;

      function button(name) {
        const active =
          name === "pushpull" ? "bg-[#c5dff6] border-[#98c4ec]" : "border-transparent";
        return `<button aria-label="${name}" class="w-[42px] h-[41px] border flex items-center justify-center ${active}">${icon(name)}</button>`;
      }

      document.getElementById("toolbar").innerHTML = groups
        .map((group, i) => {
          const items = group.split(" ").map((name) => {
            if (name === "|") return `<span class="w-2 h-[38px] pl-0.5"><i class="block w-px h-full bg-[#888]"></i></span>`;
            if (name.endsWith("+")) {
              const id = name.slice(0, -1);
              return `<button aria-label="${id}" class="w-11 h-[41px] flex items-center justify-center">${icon(id)}</button>
                <button aria-label="${id} 목록" class="w-5 h-[41px] flex items-center justify-center"><svg class="w-3 h-[7px] -mt-1" viewBox="0 0 12 7"><path d="M0 0h12L6 7z" /></svg></button>`;
            }
            return button(name);
          });
          const edge = i < 3 ? "border-r-2 border-[#c4c4c4]" : "";
          return `<div class="flex items-center ${edge}"><span class="w-[10px] flex justify-center"><i class="h-10 border-l-2 border-dotted border-[#bbb]"></i></span>${items.join("")}</div>`;
        })
        .join("");

      document.getElementById("palette").innerHTML =
        `<i class="absolute top-1 left-1 right-1 border-t-2 border-dotted border-[#bbb]"></i>` +
        paletteRows
          .map((row) =>
            row
              ? `<div class="flex h-[42px]">${row.map(button).join("")}</div>`
              : `<div class="h-2 pt-0.5 px-0.5"><i class="block h-px bg-[#888]"></i></div>`
          )
          .join("");

      document.getElementById("swatches").innerHTML = colors
        .map(
          (c) =>
            `<button aria-label="${c}" class="size-[62px] p-px border border-[#999] bg-white"><i class="block w-full h-full" style="background-color: ${c}"></i></button>`
        )
        .join("");
    </script>
  </body>
</html>
